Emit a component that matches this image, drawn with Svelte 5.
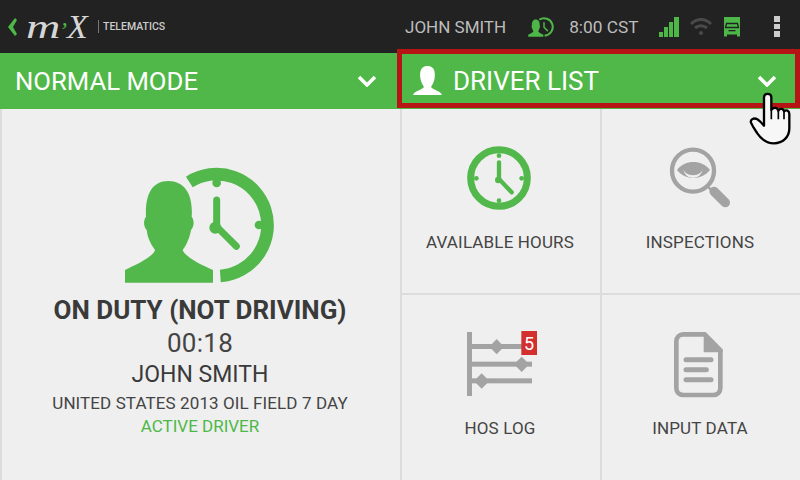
<script>
	const cells = [
		{ id: 'hours', label: 'AVAILABLE HOURS' },
		{ id: 'inspect', label: 'INSPECTIONS' },
		{ id: 'log', label: 'HOS LOG' },
		{ id: 'input', label: 'INPUT DATA' }
	];
</script>

<div class="screen">
	<header class="topbar">
		<svg class="back" width="9" height="18" viewBox="0 0 9 18"><path d="M7 0L0 9L7 18L9 16L5 9L9 2Z" fill="#4db848" /></svg>
		<span class="logo"><b>m</b><i>’</i>X</span>
		<span class="brand">TELEMATICS</span>
		<span class="user">JOHN SMITH</span>
		<svg class="status-clock" width="26" height="20" viewBox="40 35 455 352" preserveAspectRatio="none">
			<path d="M45 383V345C80 328 130 305 135 285C120 265 112 245 110 225C100 215 100 195 108 185C105 120 125 78 175 78C225 78 250 120 245 185C253 195 253 215 243 225C240 245 230 270 218 285C225 305 270 328 309 345V383Z" fill="#4db848" />
			<path d="M238 81A153 153 0 1 1 331 363" fill="none" stroke="#4db848" stroke-width="36" />
			<path d="M320 135V215L380 275" fill="none" stroke="#4db848" stroke-width="26" stroke-linecap="round" />
		</svg>
		<span class="time">8:00 CST</span>
		<svg class="signal" width="20" height="20" viewBox="0 0 20 20" fill="#4db848">
			<rect x="0" y="15" width="4" height="5" /><rect x="5" y="10" width="4" height="10" /><rect x="10" y="5" width="4" height="15" /><rect x="15" y="0" width="5" height="20" />
		</svg>
		<svg class="wifi" width="22" height="20" viewBox="0 0 22 20" fill="none" stroke="#4a4a4a" stroke-width="3">
			<path d="M1 7C7 1 15 1 21 7" /><path d="M5 11C8.500 8 13.500 8 17 11" />
			<circle cx="11" cy="16" r="2" fill="#4a4a4a" stroke="none" />
		</svg>
		<svg class="truck" width="16" height="20" viewBox="0 0 16 20">
			<path d="M0 0H16V19.500H13V17.500H3V19.500H0Z" fill="#4db848" />
			<path d="M2.500 6.500H13.500L14.500 10.500H1.500Z" fill="none" stroke="#222" stroke-width="1.300" />
			<rect x="4.500" y="13" width="7" height="1.300" fill="#222" />
		</svg>
		<div class="kebab"><span></span><span></span><span></span></div>
	</header>

	<div class="modes">
		<div class="mode">
			<span>NORMAL MODE</span>
			<svg class="chev" width="20" height="12" viewBox="0 0 20 12"><path d="M2 2L10 10L18 2" fill="none" stroke="#fff" stroke-width="3.500" /></svg>
		</div>
		<div class="mode driver">
			<svg class="head" width="29" height="30" viewBox="0 0 29 30"><path d="M0 29C1 25 9 24 11 21C9 18 8 15 7.500 13C6.500 7 7 0 14.500 0C22 0 22.500 7 21.500 13C21 15 20 18 18 21C20 24 28 25 29 29Z" fill="#fff" /></svg>
			<span>DRIVER LIST</span>
			<svg class="chev" width="20" height="12" viewBox="0 0 20 12"><path d="M2 2L10 10L18 2" fill="none" stroke="#fff" stroke-width="3.500" /></svg>
		</div>
	</div>

	<main class="body">
		<section class="status">
			<svg class="duty" width="180" height="140" viewBox="0 0 540 420">
				<path d="M45 383V345C80 328 130 305 135 285C120 265 112 245 110 225C100 215 100 195 108 185C105 120 125 78 175 78C225 78 250 120 245 185C253 195 253 215 243 225C240 245 230 270 218 285C225 305 270 328 309 345V383Z" fill="#52b84c" />
				<path d="M238 81A153 153 0 1 1 331 363" fill="none" stroke="#52b84c" stroke-width="38" />
				<circle cx="320" cy="84" r="13" fill="#52b84c" /><circle cx="447" cy="210" r="13" fill="#52b84c" />
				<path d="M320 135V215L379 274" fill="none" stroke="#52b84c" stroke-width="21" stroke-linecap="round" />
				<circle cx="316" cy="218" r="18" fill="#52b84c" />
			</svg>
			<h1>ON DUTY (NOT DRIVING)</h1>
			<div class="elapsed">00:18</div>
			<div class="name">JOHN SMITH</div>
			<div class="rule">UNITED STATES 2013 OIL FIELD 7 DAY</div>
			<div class="active">ACTIVE DRIVER</div>
		</section>

		<section class="grid">
			{#each cells as cell}
				<button class="cell">
					{#if cell.id === 'hours'}
						<svg width="100" height="90" viewBox="0 0 300 270">
							<circle cx="147" cy="132" r="85" fill="none" stroke="#52b84c" stroke-width="21" />
							<g fill="#52b84c"><circle cx="147" cy="65" r="7" /><circle cx="147" cy="200" r="7" /><circle cx="79" cy="133" r="7" /><circle cx="215" cy="133" r="7" /></g>
							<path d="M147 85V135L185 175" fill="none" stroke="#52b84c" stroke-width="13" stroke-linecap="round" />
							<circle cx="145" cy="138" r="10" fill="#52b84c" />
						</svg>
					{:else if cell.id === 'inspect'}
						<svg width="100" height="90" viewBox="0 0 300 270">
							<circle cx="129" cy="110" r="63" fill="none" stroke="#a3a3a3" stroke-width="13" />
							<path d="M175 160L205 185" stroke="#a3a3a3" stroke-width="7" />
							<path d="M192 172L226 206" stroke="#a3a3a3" stroke-width="28" stroke-linecap="round" />
							<path d="M81 108C105 76 155 76 180 108C155 140 105 140 81 108Z" fill="#a3a3a3" />
							<path d="M100 103A29 29 0 0 0 158 103A29 21 0 0 1 100 103Z" fill="#efefef" />
						</svg>
					{:else if cell.id === 'log'}
						<svg width="100" height="90" viewBox="0 0 300 270">
							<g fill="#a3a3a3">
								<rect x="51" y="36" width="15" height="192" />
								<rect x="66" y="72" width="170" height="15" />
								<rect x="66" y="125" width="180" height="15" />
								<rect x="66" y="175" width="180" height="15" />
								<path d="M140 57L162 80L140 103L118 80Z" />
								<path d="M215 110L238 133L215 156L192 133Z" />
								<path d="M95 160L118 183L95 206L72 183Z" />
							</g>
							<rect x="214" y="33" width="47" height="72" fill="#d32f2f" />
						</svg>
						<span class="badge">5</span>
					{:else}
						<svg width="100" height="90" viewBox="0 0 300 270">
							<path d="M165 43H100C88 43 79 52 79 64V204C79 216 88 225 100 225H190C202 225 211 216 211 204V90" fill="none" stroke="#a3a3a3" stroke-width="14" />
							<path d="M167 36L218 88V97H161V36Z" fill="#a3a3a3" />
							<g stroke="#a3a3a3" stroke-width="15" stroke-linecap="round"><path d="M108 119H183" /><path d="M108 149H169" /><path d="M108 179H183" /></g>
						</svg>
					{/if}
					<span class="label">{cell.label}</span>
				</button>
			{/each}
		</section>
	</main>

	<svg class="hand" width="100" height="100" viewBox="0 0 300 300">
		<path d="M192 112C192 98 214 98 214 112V150C220 140 232 142 235 152C240 144 250 145 252 154C258 148 268 152 268 162V205C268 232 248 250 222 250C198 250 184 238 172 220C164 208 158 200 153 188C150 178 162 172 172 178C180 183 186 190 192 197Z" fill="#f7f7f7" stroke="#000" stroke-width="7" stroke-linejoin="round" />
		<path d="M235 152V178M252 154V178M214 150V178" stroke="#000" stroke-width="5" fill="none" />
	</svg>
</div>

<style>
	:global(body) {
		margin: 0;
		background: #efefef;
	}
	.screen {
		position: relative;
		width: 800px;
		height: 480px;
		overflow: hidden;
		display: flex;
		flex-direction: column;
		font-family: Roboto, "Liberation Sans", sans-serif;
		color: #444;
		background: #dcdcdc;
	}
	.topbar {
		height: 53px;
		flex: none;
		background: #222;
		display: flex;
		align-items: center;
		color: #bdbdbd;
		font-size: 17px;
	}
	.back {
		margin-left: 8px;
		flex: none;
	}
	.logo {
		margin-left: 9px;
		width: 70px;
		flex: none;
		white-space: nowrap;
		font: italic 34px/1 "Liberation Serif", serif;
		color: #d6d6d6;
	}
	.logo b {
		display: inline-block;
		font-weight: 400;
		width: 33px;
		transform: scaleX(1.4);
		transform-origin: left;
	}
	.logo i {
		color: #4db848;
		font-size: 24px;
	}
	.brand {
		margin-left: 2px;
		padding-left: 4px;
		width: 63px;
		flex: none;
		border-left: 1px solid #777;
		font-size: 10.500px;
		font-weight: 500;
		line-height: 13px;
		color: #ccc;
	}
	.user {
		margin-left: 239px;
	}
	.status-clock {
		margin-left: 22px;
	}
	.time {
		margin-left: 15px;
		font-size: 17.300px;
	}
	.signal {
		margin-left: 20px;
	}
	.wifi {
		margin-left: 11px;
	}
	.truck {
		margin-left: 12px;
	}
	.kebab {
		margin-left: 34px;
		display: flex;
		flex-direction: column;
		gap: 2px;
	}
	.kebab span {
		width: 6px;
		height: 5.500px;
		background: #ccc;
	}
	.modes {
		height: 56px;
		flex: none;
		display: grid;
		grid-template-columns: 398px 1fr;
		padding-left: 2px;
		background: #4fb848;
		color: #fff;
		font-size: 25.700px;
	}
	.mode {
		display: flex;
		align-items: center;
		padding-left: 13px;
		position: relative;
	}
	.mode .chev {
		margin-left: auto;
		margin-right: 23px;
	}
	.driver {
		font-size: 26px;
	}
	.driver .head {
		margin-right: 11px;
	}
	.driver::after {
		content: '';
		position: absolute;
		left: -3px;
		top: -4px;
		right: 0;
		bottom: 1px;
		border: 5px solid #b71515;
	}
	.body {
		flex: 1;
		display: grid;
		grid-template-columns: 398px 1fr;
		gap: 2px;
		padding-left: 2px;
		min-height: 0;
	}
	.status {
		background: #efefef;
		display: flex;
		flex-direction: column;
		align-items: center;
		padding-right: 2px;
	}
	.duty {
		margin-top: 46px;
		flex: none;
	}
	h1 {
		margin: 1px 0 0;
		font-size: 26px;
		font-weight: 700;
		line-height: 29px;
		color: #3a3a3a;
	}
	.elapsed {
		font-size: 26px;
		line-height: 32px;
		margin-top: 2px;
		letter-spacing: 0.3px;
	}
	.name {
		font-size: 23px;
		line-height: 26px;
		margin-top: 3px;
		color: #3a3a3a;
	}
	.rule {
		font-size: 17px;
		line-height: 20px;
		margin-top: 5px;
		letter-spacing: 0.1px;
	}
	.active {
		font-size: 17px;
		line-height: 20px;
		margin-top: 3px;
		color: #4db848;
	}
	.grid {
		display: grid;
		grid-template-columns: 198px 198px;
		grid-template-rows: 184px 185px;
		gap: 2px;
	}
	.cell {
		position: relative;
		border: 0;
		padding: 0;
		font: inherit;
		background: #efefef;
		color: #444;
		display: flex;
		flex-direction: column;
		align-items: center;
	}
	.cell svg {
		margin-top: 25px;
		margin-left: -2px;
		flex: none;
	}
	.label {
		font-size: 17px;
		line-height: 20px;
		margin-top: 8px;
		margin-right: 2px;
		letter-spacing: 0.15px;
	}
	.badge {
		position: absolute;
		left: 119px;
		top: 37px;
		width: 16px;
		text-align: center;
		color: #fff;
		font-size: 18px;
		line-height: 24px;
	}
	.hand {
		position: absolute;
		left: 700px;
		top: 60px;
	}
</style>
